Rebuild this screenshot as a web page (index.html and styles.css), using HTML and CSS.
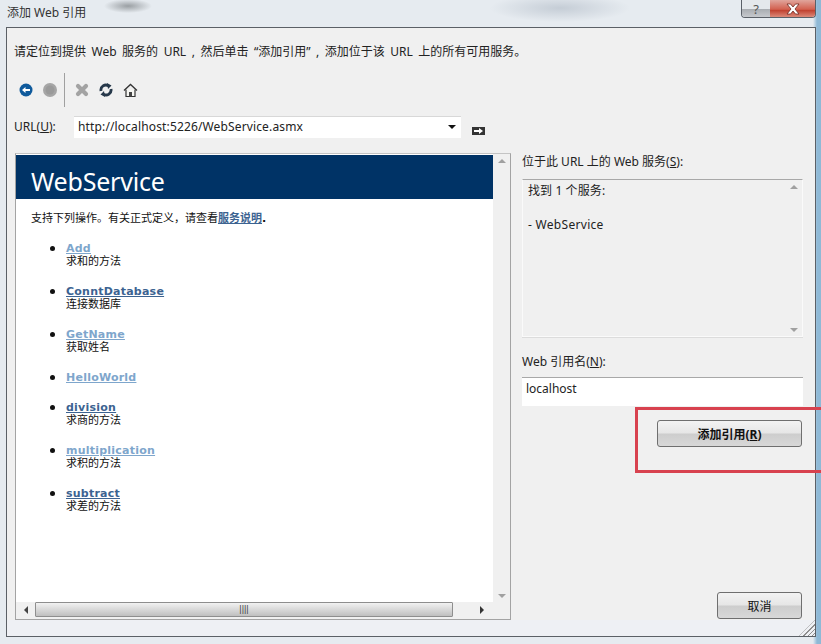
FILE: index.html
```html
<!DOCTYPE html>
<html lang="zh-CN">
<head>
    <meta charset="UTF-8">
    <meta name="viewport" content="width=device-width, initial-scale=1.0">
    <title>添加 Web 引用</title>
    <link rel="stylesheet" href="styles.css">
</head>
<body>
    <div class="window">
        <div class="titlebar">
            <span class="title">添加 Web 引用</span>
            <div class="caption-buttons">
                <div class="caption-btn help">?</div>
                <div class="caption-btn close">
                    <svg viewBox="0 0 16 12" width="16" height="12">
                        <path d="M2 1h3.500L8 4l2.500-3H14L10 6l4 5h-3.500L8 8l-2.500 3H2l4-5z" fill="#fff" stroke="#6e2a22" stroke-width="0.8"/>
                    </svg>
                </div>
            </div>
        </div>

        <div class="client">
            <p class="instruction">请定位到提供 Web 服务的 URL , 然后单击 “添加引用” , 添加位于该 URL 上的所有可用服务。</p>

            <div class="toolbar">
                <div class="tool">
                    <svg viewBox="0 0 14 14" width="14" height="14">
                        <circle cx="7" cy="7" r="6.500" fill="#0f5a9c"/>
                        <path d="M3 7l3.500-3v2H11v2H6.500v2z" fill="#fff"/>
                    </svg>
                </div>
                <div class="tool">
                    <svg viewBox="0 0 16 16" width="16" height="16">
                        <circle cx="8" cy="8" r="7" fill="#a6a6a6"/>
                        <circle cx="8" cy="8" r="4.500" fill="#9a9a9a"/>
                    </svg>
                </div>
                <div class="tool-sep"></div>
                <div class="tool">
                    <svg viewBox="0 0 14 14" width="14" height="14">
                        <path d="M3 3l8 8M11 3l-8 8" stroke="#a3a3a3" stroke-width="4.200" stroke-linecap="round"/>
                    </svg>
                </div>
                <div class="tool">
                    <svg viewBox="0 0 14 14" width="14" height="14">
                        <path d="M2 8a5 5 0 0 1 7.500-5.200" fill="none" stroke="#26384a" stroke-width="2.800"/>
                        <path d="M12 6a5 5 0 0 1-7.500 5.200" fill="none" stroke="#26384a" stroke-width="2.800"/>
                        <path d="M8 0l4.500 2.500-3.500 3.500zM6 14l-4.500-2.500 3.500-3.500z" fill="#26384a"/>
                    </svg>
                </div>
                <div class="tool">
                    <svg viewBox="0 0 15 15" width="15" height="15">
                        <path d="M1 7.500L7.500 1.500 14 7.500" fill="none" stroke="#333" stroke-width="1.300"/>
                        <path d="M3 6.500V13.500H12V6.500" fill="#f6f6f2" stroke="#333" stroke-width="1.200"/>
                        <rect x="6" y="9" width="3" height="4.500" fill="#444"/>
                    </svg>
                </div>
            </div>

            <div class="url-row">
                <label class="url-label">URL(<u>U</u>):</label>
                <div class="url-box">
                    <span>http://localhost:5226/WebService.asmx</span>
                    <i class="combo-arrow"></i>
                </div>
                <div class="go-btn">
                    <svg viewBox="0 0 13 8" width="13" height="8">
                        <rect width="13" height="8" fill="#333"/>
                        <path d="M2 3h5V1l4 3-4 3V5H2z" fill="#fff"/>
                    </svg>
                </div>
            </div>

            <div class="main">
                <div class="browser">
                    <div class="doc">
                        <h1 class="doc-heading">WebService</h1>
                        <p class="doc-intro">支持下列操作。有关正式定义，请查看<a class="link-dark" href="#">服务说明</a><b>.</b></p>
                        <ul class="ops">
                            <li><a class="link-light" href="#">Add</a><span>求和的方法</span></li>
                            <li><a class="link-dark" href="#">ConntDatabase</a><span>连接数据库</span></li>
                            <li><a class="link-light" href="#">GetName</a><span>获取姓名</span></li>
                            <li><a class="link-light" href="#">HelloWorld</a></li>
                            <li><a class="link-dark" href="#">division</a><span>求商的方法</span></li>
                            <li><a class="link-light" href="#">multiplication</a><span>求积的方法</span></li>
                            <li><a class="link-dark" href="#">subtract</a><span>求差的方法</span></li>
                        </ul>
                    </div>
                    <div class="vscroll">
                        <i class="arrow-up"></i>
                        <i class="arrow-down"></i>
                    </div>
                    <div class="hscroll">
                        <div class="hbtn"><i class="arrow-left"></i></div>
                        <div class="hthumb">||||</div>
                        <div class="hbtn end"><i class="arrow-right"></i></div>
                    </div>
                </div>

                <div class="side">
                    <label class="side-label first">位于此 URL 上的 Web 服务(<u>S</u>):</label>
                    <div class="services">
                        <div class="services-text">
                            <p>找到 1 个服务:</p>
                            <p class="service-item">- WebService</p>
                        </div>
                        <div class="vscroll">
                            <i class="arrow-up"></i>
                            <i class="arrow-down"></i>
                        </div>
                    </div>
                    <label class="side-label">Web 引用名(<u>N</u>):</label>
                    <div class="name-input">localhost</div>
                    <button class="btn btn-add">添加引用(<u>R</u>)</button>
                    <button class="btn btn-cancel">取消</button>
                </div>
            </div>

            <div class="grip"></div>
        </div>
    </div>

    <!-- red annotation box on top of the screenshot -->
    <div class="highlight"></div>
</body>
</html>
```

FILE: styles.css
```css
* {
    margin: 0;
    padding: 0;
    box-sizing: border-box;
}

body {
    width: 821px;
    height: 644px;
    overflow: hidden;
    position: relative;
    font-family: "Noto Sans", "Noto Sans CJK SC", sans-serif;
    font-size: 12px;
    color: #222;
    background:
        radial-gradient(ellipse 24px 7px at 128px 6px, #9a9fa3, transparent),
        radial-gradient(ellipse 70px 14px at 560px 8px, #c5cdd6, transparent),
        linear-gradient(90deg, transparent 813px, #8fb9d6 817px),
        #e6ebf0;
}

.window {
    height: 644px;
    display: flex;
    flex-direction: column;
}

/* Title bar */
.titlebar {
    height: 27px;
    flex: none;
    display: flex;
    justify-content: space-between;
    align-items: flex-start;
    padding: 0 5px 0 7px;
}

.title {
    font-size: 12px;
    line-height: 26px;
    color: #333;
}

.caption-buttons {
    display: flex;
    height: 18px;
    border: 1px solid #5a6068;
    border-top: none;
    border-radius: 0 0 4px 4px;
    overflow: hidden;
}

.caption-btn {
    display: flex;
    align-items: center;
    justify-content: center;
}

.help {
    width: 28px;
    font-size: 13px;
    color: #555;
    background: linear-gradient(#e4e8ec 50%, #a9adb2 55%, #c6c9cd);
}

.close {
    width: 45px;
    background: linear-gradient(#e0a59c, #d2604f 55%, #c0402f 60%, #dc8a7a);
}

/* Client area */
.client {
    flex: 1;
    position: relative;
    margin: 0 5px 7px 6px;
    padding-left: 7px;
    background: linear-gradient(#f0f0f0 calc(100% - 16px), #eef0f4 calc(100% - 16px));
    border: 1px solid #5b6066;
}

.instruction {
    margin-top: 15px;
    line-height: 17px;
    font-size: 12px;
    word-spacing: 2.4px;
    white-space: nowrap;
}

.toolbar {
    height: 34px;
    margin-top: 13px;
    display: flex;
    align-items: center;
}

.tool {
    width: 24px;
    display: flex;
    align-items: center;
    justify-content: center;
}

.tool-sep {
    width: 1px;
    height: 34px;
    margin: 0 5px 0 2px;
    background: #a0a0a0;
}

.url-row {
    height: 22px;
    margin-top: 9px;
    display: flex;
    align-items: center;
}

.url-label {
    width: 60px;
    padding-bottom: 2px;
    font-size: 12px;
}

.url-box {
    width: 387px;
    height: 22px;
    padding: 0 4px 2px;
    display: flex;
    align-items: center;
    justify-content: space-between;
    background: #fff;
    font-size: 12px;
    letter-spacing: 0.14px;
    border-top: 1px solid #d8d8d8;
}

.combo-arrow {
    margin-right: 1px;
    border: 4px solid transparent;
    border-top: 4px solid #111;
    border-bottom: none;
}

.go-btn {
    margin: 8px 0 0 11px;
    display: flex;
}

/* Main panes */
.main {
    height: 467px;
    margin: 15px 0 0 1px;
    display: grid;
    grid-template-columns: 496px 281px;
    column-gap: 11px;
}

.browser {
    position: relative;
    display: grid;
    grid-template-columns: 1fr 17px;
    grid-template-rows: 1fr 17px;
    background: #fff;
    border: 1px solid #a3a3a3;
    border-top-color: #c4c4c4;
}

.doc {
    padding-top: 1px;
    background: #fff;
    overflow: hidden;
}

.doc-heading {
    height: 44px;
    padding-left: 15px;
    background: #003366;
    color: #fff;
    font-size: 25px;
    font-weight: 400;
    letter-spacing: -0.2px;
    line-height: 53px;
    overflow: hidden;
}

.doc-intro {
    margin: 13px 0 0 15px;
    font-size: 11px;
    line-height: 14px;
    color: #111;
    font-family: "DejaVu Sans", "Noto Sans CJK SC", sans-serif;
}

.doc-intro a {
    font-weight: 700;
}

.ops {
    margin: 16px 0 0 50px;
    list-style: none;
    font-family: "DejaVu Sans", "Noto Sans CJK SC", sans-serif;
    font-size: 11px;
    color: #111;
}

.ops li {
    position: relative;
    margin-bottom: 17px;
}

/* bullet sits in the list indent */
.ops li::before {
    content: "";
    position: absolute;
    left: -16px;
    top: 4px;
    width: 5px;
    height: 5px;
    border-radius: 50%;
    background: #111;
}

.ops a {
    display: block;
    font-weight: 700;
    letter-spacing: 0.23px;
    line-height: 13px;
}

.ops span {
    display: block;
    margin-top: 1px;
    line-height: 12px;
}

.link-light {
    color: #7ea6cc;
}

.link-dark {
    color: #3c6391;
}

.vscroll {
    position: relative;
    background: #f0f0f0;
    width: 17px;
}

.vscroll .arrow-up {
    position: absolute;
    top: 5px;
    left: 5px;
}

.vscroll .arrow-down {
    position: absolute;
    bottom: 4px;
    left: 5px;
}

.arrow-up {
    border: 4px solid transparent;
    border-bottom: 4px solid #a0a0a0;
    border-top: none;
}

.arrow-down {
    border: 4px solid transparent;
    border-top: 4px solid #a0a0a0;
    border-bottom: none;
}

.arrow-left {
    border: 4px solid transparent;
    border-right: 4px solid #444;
    border-left: none;
}

.arrow-right {
    border: 4px solid transparent;
    border-left: 4px solid #333;
    border-right: none;
}

.hscroll {
    grid-column: 1 / 3;
    display: flex;
    background: #f0f0f0;
    padding-bottom: 2px;
}

.hbtn {
    width: 19px;
    display: flex;
    align-items: center;
    justify-content: center;
}

.hbtn.end {
    width: 22px;
    margin-left: 18px;
}

.hthumb {
    width: 418px;
    border: 1px solid #8e8e8e;
    border-radius: 1px;
    background: linear-gradient(#f2f2f2, #d6d6d6 55%, #bfbfbf);
    font-family: "Liberation Sans", sans-serif;
    font-size: 9px;
    line-height: 13px;
    text-align: center;
    color: #444;
}

/* Right column */
.side {
    display: flex;
    flex-direction: column;
}

.side-label {
    height: 18px;
    margin-top: 16px;
    margin-bottom: 6px;
    line-height: 18px;
    font-size: 12px;
}

.side-label.first {
    margin-top: 0;
    margin-bottom: 8px;
}

.services {
    height: 158px;
    display: flex;
    justify-content: space-between;
    background: #f0f0f0;
    border: 1px solid #fafafa;
    border-top: 1px solid #a8a8a8;
    box-shadow: 0 1px 0 #dcdcdc;
}

.services-text {
    padding: 2px 5px;
    font-size: 12px;
    line-height: 18px;
    letter-spacing: 0.1px;
}

.service-item {
    margin-top: 16px;
    letter-spacing: 0.3px;
}

.name-input {
    height: 29px;
    padding: 2px 4px;
    background: #fff;
    border-top: 1px solid #a8a8a8;
    font-size: 12px;
    line-height: 18px;
}

.btn {
    align-self: flex-end;
    height: 27px;
    margin-right: 1px;
    border: 1px solid #6f6f6f;
    border-radius: 3px;
    background: linear-gradient(#f3f3f3, #e6e6e6 48%, #cdcdcd 52%, #d8d8d8);
    font-family: "Noto Sans", "Noto Sans CJK SC", sans-serif;
    font-size: 12px;
    color: #111;
}

.btn-add {
    width: 145px;
    margin-top: 14px;
    font-weight: 700;
}

.btn-cancel {
    width: 85px;
    margin-top: auto;
    margin-bottom: 1px;
    font-weight: 400;
}

.grip {
    position: absolute;
    right: 0;
    bottom: 0;
    width: 16px;
    height: 16px;
    background: repeating-linear-gradient(135deg, #eef0f4 0 2px, #8f8f8f 2px 3px);
    clip-path: polygon(100% 0, 100% 100%, 0 100%);
}

.highlight {
    position: absolute;
    left: 635px;
    top: 407px;
    width: 186px;
    height: 66px;
    border: 3px solid #d8424f;
    border-right: none;
}
```
